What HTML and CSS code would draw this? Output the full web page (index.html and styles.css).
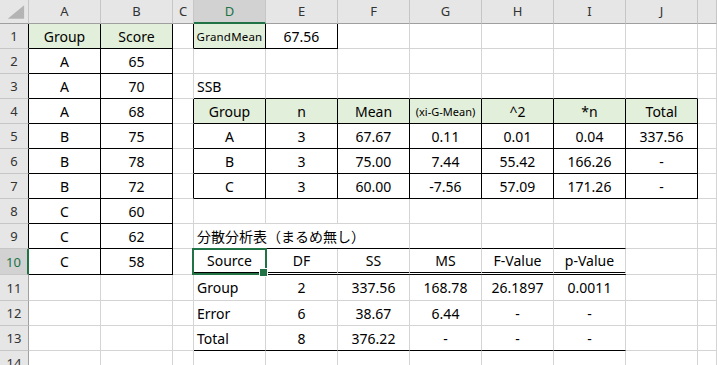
FILE: index.html
```html
<!DOCTYPE html>
<html lang="ja">
<head>
<meta charset="utf-8">
<title>Sheet</title>
<link rel="stylesheet" href="styles.css">
</head>
<body>
<div class="sheet">
  <div class="corner"><svg width="29" height="23" viewBox="0 0 29 23"><polygon points="8,19 25,19 25,5" fill="#b4b4b4"/></svg></div>
  <div class="hd">A</div><div class="hd">B</div><div class="hd">C</div><div class="hd on">D</div><div class="hd">E</div><div class="hd">F</div><div class="hd">G</div><div class="hd">H</div><div class="hd">I</div><div class="hd">J</div><div class="hd"></div>

  <div class="rh k">1</div>
  <div class="g r b">Group</div><div class="g r b">Score</div><div class="r"></div>
  <div class="g r b sm">GrandMean</div><div class="r b">67.56</div><div></div><div></div><div></div><div></div><div></div><div></div>

  <div class="rh k">2</div>
  <div class="r b">A</div><div class="r b">65</div><div></div>
  <div></div><div></div><div></div><div></div><div></div><div></div><div></div><div></div>

  <div class="rh k">3</div>
  <div class="r b">A</div><div class="r b">70</div><div></div>
  <div class="l b">SSB</div><div class="b"></div><div class="b"></div><div class="b"></div><div class="b"></div><div class="b"></div><div class="b"></div><div></div>

  <div class="rh k">4</div>
  <div class="r b">A</div><div class="r b">68</div><div class="r"></div>
  <div class="g r b">Group</div><div class="g r b">n</div><div class="g r b">Mean</div><div class="g r b xs">(xi-G-Mean)</div><div class="g r b">^2</div><div class="g r b">*n</div><div class="g r b">Total</div><div></div>

  <div class="rh k">5</div>
  <div class="r b">B</div><div class="r b">75</div><div class="r"></div>
  <div class="r b">A</div><div class="r b">3</div><div class="r b">67.67</div><div class="r b">0.11</div><div class="r b">0.01</div><div class="r b">0.04</div><div class="r b">337.56</div><div></div>

  <div class="rh k">6</div>
  <div class="r b">B</div><div class="r b">78</div><div class="r"></div>
  <div class="r b">B</div><div class="r b">3</div><div class="r b">75.00</div><div class="r b">7.44</div><div class="r b">55.42</div><div class="r b">166.26</div><div class="r b">-</div><div></div>

  <div class="rh k">7</div>
  <div class="r b">B</div><div class="r b">72</div><div class="r"></div>
  <div class="r b">C</div><div class="r b">3</div><div class="r b">60.00</div><div class="r b">-7.56</div><div class="r b">57.09</div><div class="r b">171.26</div><div class="r b">-</div><div></div>

  <div class="rh k">8</div>
  <div class="r b">C</div><div class="r b">60</div><div></div>
  <div></div><div></div><div></div><div></div><div></div><div></div><div></div><div></div>

  <div class="rh k">9</div>
  <div class="r b">C</div><div class="r b">62</div><div></div>
  <div class="l b span3">分散分析表（まるめ無し）</div><div class="b"></div><div class="b"></div><div class="b"></div><div></div><div></div>

  <div class="rh on">10</div>
  <div class="r b">C</div><div class="r b">58</div><div></div>
  <div class="dbl sel">Source</div><div class="dbl">DF</div><div class="dbl">SS</div><div class="dbl">MS</div><div class="dbl">F-Value</div><div class="dbl">p-Value</div><div></div><div></div>

  <div class="rh">11</div>
  <div></div><div></div><div></div>
  <div class="l">Group</div><div>2</div><div>337.56</div><div>168.78</div><div>26.1897</div><div>0.0011</div><div></div><div></div>

  <div class="rh">12</div>
  <div></div><div></div><div></div>
  <div class="l">Error</div><div>6</div><div>38.67</div><div>6.44</div><div>-</div><div>-</div><div></div><div></div>

  <div class="rh">13</div>
  <div></div><div></div><div></div>
  <div class="l b">Total</div><div class="b">8</div><div class="b">376.22</div><div class="b">-</div><div class="b">-</div><div class="b">-</div><div></div><div></div>

  <div class="rh">14</div>
  <div></div><div></div><div></div><div></div><div></div><div></div><div></div><div></div><div></div><div></div><div></div>
</div>
</body>
</html>
```

FILE: styles.css
```css
* { box-sizing: border-box; }
html, body { margin: 0; padding: 0; background: #fff; overflow: hidden; }
body {
  width: 717px;
  height: 365px;
  font-family: "Noto Sans", "Noto Sans CJK JP", sans-serif;
}
.sheet {
  display: grid;
  grid-template-columns: 29px 72px 72px 21px repeat(7, 72px) 1fr;
  grid-template-rows: 24px repeat(9, 25px) 26px 26px 25px 25px 25px;
}
.sheet > div {
  display: flex;
  align-items: center;
  justify-content: center;
  border-right: 1px solid #d4d4d4;
  border-bottom: 1px solid #d4d4d4;
  font-size: 14px;
  color: #000;
  white-space: nowrap;
  overflow: hidden;
  padding: 0 3px;
}
.sheet > .corner {
  background: #e6e6e6;
  border-right-color: #c6c6c6;
  border-bottom-color: #9f9f9f;
  padding: 0;
  align-items: flex-start;
  justify-content: flex-start;
}
.corner svg { display: block; }
.sheet > .hd {
  background: #e6e6e6;
  border-right-color: #c6c6c6;
  border-bottom-color: #9f9f9f;
  font-size: 13px;
  color: #333;
  padding-bottom: 1px;
}
.sheet > .hd.on {
  background: #d2d2d2;
  border-bottom: 2px solid #217346;
  color: #217346;
}
.sheet > .rh {
  background: #e6e6e6;
  border-right-color: #9f9f9f;
  border-bottom-color: #c6c6c6;
  font-size: 13px;
  color: #333;
  padding: 0;
}
.sheet > .rh.k { border-right-color: #000; }
.sheet > .rh.on {
  background: #d2d2d2;
  border-right: 2px solid #217346;
  color: #217346;
}
.sheet > .r { border-right-color: #000; }
.sheet > .b { border-bottom-color: #000; }
.sheet > .g { background: #e2efda; }
.sheet > .l { justify-content: flex-start; }
.sheet > .sm { font-size: 11.5px; letter-spacing: 0.2px; }
.sheet > .xs { font-size: 11px; }
.sheet > .dbl { border-bottom: 3px double #000; }
.sheet > .span3 { grid-column: span 3; overflow: visible; }
.sheet > .sel { position: relative; overflow: visible; }
.sel::after {
  content: "";
  position: absolute;
  left: -2px;
  top: -1px;
  right: -2px;
  bottom: -3px;
  border: 2px solid #217346;
}
.sel::before {
  content: "";
  position: absolute;
  right: -3px;
  bottom: -5px;
  width: 7px;
  height: 7px;
  background: #217346;
  border: 1px solid #fff;
  z-index: 2;
}
```
